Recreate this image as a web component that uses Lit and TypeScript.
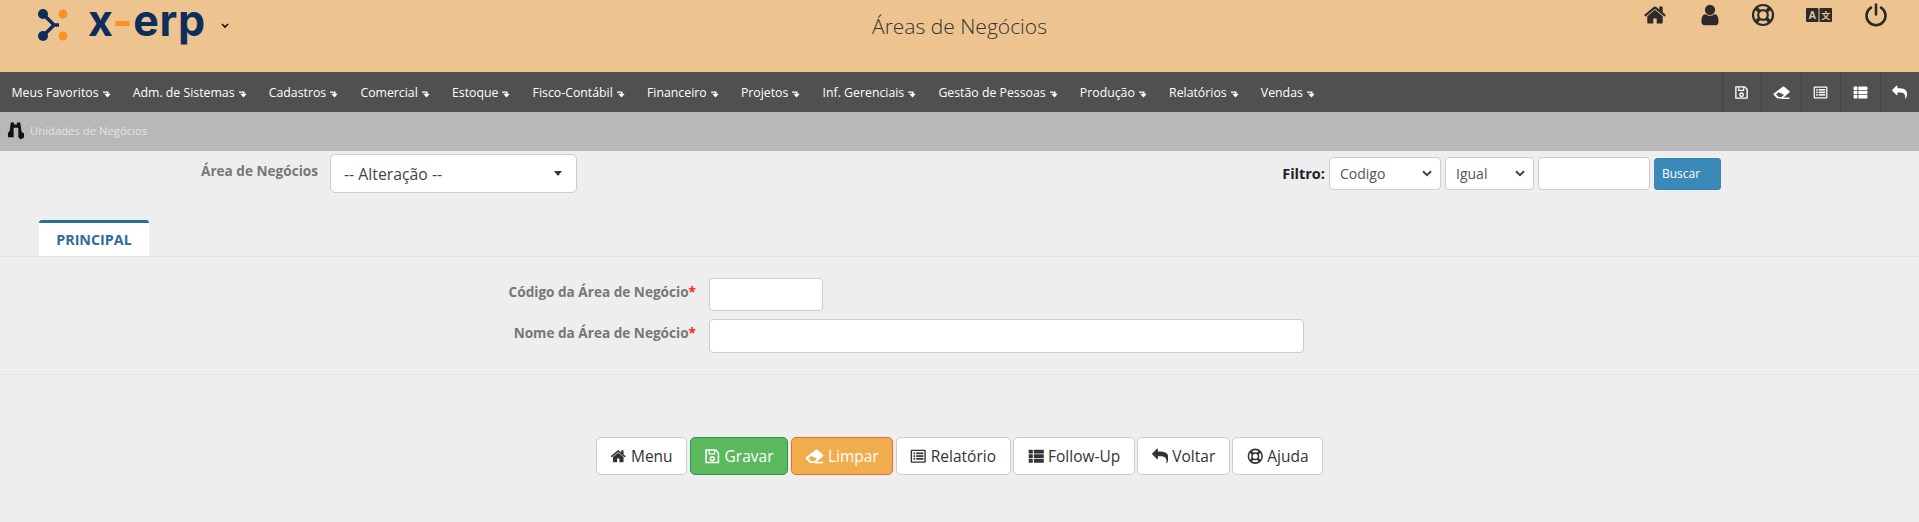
import { LitElement, css, html, svg } from "lit";
import { customElement } from "lit/decorators.js";

const fa = (d: string, w = 1792) =>
  html`<svg class="ico" viewBox="0 0 ${w} 1792" fill="currentColor"><path d=${d}></path></svg>`;

const home = () => fa("M1472 992v480q0 26-19 45t-45 19h-384v-384h-256v384h-384q-26 0-45-19t-19-45v-480q0-1 .5-3t.5-3l575-474 575 474q1 2 1 6zm223-69l-62 74q-8 9-21 11h-3q-13 0-21-7l-692-577-692 577q-12 8-24 7-13-2-21-11l-62-74q-8-10-7-23.500t11-21.500l719-599q32-26 76-26t76 26l244 204v-195q0-14 9-23t23-9h192q14 0 23 9t9 23v408l219 182q10 8 11 21.500t-7 23.500z");
const reply = () => fa("M1792 1120q0 166-127 451-3 7-10.500 24t-13.500 30-13 22q-12 17-28 17-15 0-23.500-10t-8.500-25q0-9 2.500-26.500t2.500-23.500q5-68 5-123 0-101-17.500-181t-48.500-138.500-80-101-105.500-69.500-133-42.500-154-21.500-175.500-6h-224v256q0 26-19 45t-45 19-45-19l-512-512q-19-19-19-45t19-45l512-512q19-19 45-19t45 19 19 45v256h224q713 0 875 403 53 134 53 333z");

const eraser = () => html`<svg class="ico wide" viewBox="0 0 24 20" fill="currentColor">
  <path fill-rule="evenodd" d="M14 1.500a2 2 0 0 1 1.600.400l7 6a1.500 1.500 0 0 1 .1 2.200L13 18.500H7a2 2 0 0 1-1.400-.6L1.200 13.500a1.500 1.500 0 0 1 0-2.100zM7.800 9.800l-3.600 3 3.700 3.500h4.300l3.100-3z"></path>
  <rect x="12" y="17" width="11" height="2"></rect>
</svg>`;

const save = () => html`<svg class="ico" viewBox="0 0 24 24" fill="none" stroke="currentColor" stroke-width="2.200">
  <path d="M3 3h14l4 4v14H3z"></path>
  <path d="M7.500 3v5.500h8V3" stroke-width="1.800"></path>
  <circle cx="12" cy="15.500" r="2.800"></circle>
</svg>`;

const listAlt = () => html`<svg class="ico" viewBox="0 0 24 24" fill="currentColor">
  <path fill-rule="evenodd" d="M2.500 2.500h19a1.500 1.500 0 0 1 1.500 1.500v16a1.500 1.500 0 0 1-1.500 1.500h-19A1.500 1.500 0 0 1 1 20V4a1.500 1.500 0 0 1 1.500-1.500zM3 4.500v15h18v-15z"></path>
  ${[6.5, 10.5, 14.5].map((y) => svg`<rect x="5" y=${y} width="2.500" height="2.500"></rect><rect x="9" y=${y} width="10.500" height="2.500"></rect>`)}
</svg>`;

const thList = () => html`<svg class="ico" viewBox="0 0 24 24" fill="currentColor">
  ${[2.5, 9.2, 15.9].map((y) => svg`<rect x="1" y=${y} width="6" height="5.600" rx=".6"></rect><rect x="8.500" y=${y} width="14.500" height="5.600" rx=".6"></rect>`)}
</svg>`;

const lifeRing = () => html`<svg class="ico" viewBox="0 0 24 24" fill="none" stroke="currentColor">
  <circle cx="12" cy="12" r="10" stroke-width="2.200"></circle>
  <circle cx="12" cy="12" r="4.800" stroke-width="2.200"></circle>
  <path d="M5 5l4 4M19 5l-4 4M5 19l4-4M19 19l-4-4" stroke-width="3.600"></path>
</svg>`;

const user = () => fa("M1536 1399q0 109-62.500 187t-150.500 78h-854q-88 0-150.500-78t-62.500-187q0-85 8.500-160.500t31.500-152 58.500-131 94-89 134.500-34.500q131 128 313 128t313-128q76 0 134.500 34.500t94 89 58.500 131 31.500 152 8.500 160.500zm-256-887q0 159-112.500 271.500t-271.500 112.500-271.500-112.500-112.500-271.500 112.500-271.500 271.500-112.500 271.500 112.500 112.500 271.500z");

const power = () => html`<svg class="ico" viewBox="0 0 24 24" fill="none" stroke="currentColor" stroke-width="2.600" stroke-linecap="round">
  <path d="M7 4.600a9.500 9.500 0 1 0 10 0"></path>
  <path d="M12 1.500v10"></path>
</svg>`;

const caret = () => html`<svg class="caret" viewBox="0 0 8 7" fill="currentColor">
  <path d="M0 .5h5.500v2.300H7.800L4.500 6.500 1.200 2.800h2.800V1.800H0z"></path>
</svg>`;

const binoculars = () => html`<svg class="binoc" viewBox="0 0 18 20" fill="currentColor">
  <path d="M4 1H7.500V3H10.500V1H14L15.500 11L18 12.500V17L14.500 19L12 16.500V6.500H7V16.500H1V12L2.800 10Z"></path>
</svg>`;

const NAV = [
  "Meus Favoritos", "Adm. de Sistemas", "Cadastros", "Comercial", "Estoque", "Fisco-Contábil",
  "Financeiro", "Projetos", "Inf. Gerenciais", "Gestão de Pessoas", "Produção", "Relatórios", "Vendas",
];

const ACTIONS = [
  { label: "Menu", icon: home, cls: "" },
  { label: "Gravar", icon: save, cls: "ok" },
  { label: "Limpar", icon: eraser, cls: "warn" },
  { label: "Relatório", icon: listAlt, cls: "" },
  { label: "Follow-Up", icon: thList, cls: "" },
  { label: "Voltar", icon: reply, cls: "" },
  { label: "Ajuda", icon: lifeRing, cls: "" },
];

@customElement("app-root")
export class AppRoot extends LitElement {
  static styles = css`
    :host {
      display: block;
      min-height: 522px;
      background: #eeeeee;
      font-family: "Open Sans", "Liberation Sans", sans-serif;
      color: #333;
    }
    .ico {
      display: block;
      width: 1em;
      height: 1em;
      flex: none;
    }
    .ico.wide {
      width: 1.15em;
    }

    /* topo */
    .top {
      height: 72px;
      background: #edc490;
      display: grid;
      grid-template-columns: 1fr auto 1fr;
    }
    .brand {
      display: flex;
      align-items: flex-start;
      padding-left: 37px;
    }
    .brand svg.mark {
      width: 32px;
      height: 34px;
      flex: none;
      margin-top: 9px;
    }
    .brand .word {
      margin-left: 19px;
      font-family: Inter, "Open Sans", sans-serif;
      font-weight: 700;
      font-size: 43px;
      line-height: 0.95;
      letter-spacing: 0.6px;
      color: #0d2d5c;
    }
    .brand .word span {
      color: #f7931e;
    }
    .brand .chev {
      width: 8px;
      height: 6px;
      margin: 23px 0 0 15px;
    }
    .title {
      font-size: 21px;
      font-weight: 300;
      line-height: 52px;
      color: #333;
    }
    .quick {
      justify-self: end;
      display: grid;
      grid-template-columns: 54px 56px 50px 62px 52px;
      padding: 3px 17px 0 0;
      height: 24px;
      justify-items: center;
      align-items: center;
      color: #2b2b2b;
      font-size: 24px;
    }
    .lang {
      width: 26px;
      height: 14px;
      font-family: "Liberation Sans", "Noto Sans CJK SC", sans-serif;
    }

    /* menu */
    .menu {
      height: 40px;
      background: #505050;
      color: #fff;
      display: flex;
      align-items: center;
      font-size: 12.300px;
    }
    .menu ul {
      flex: 1;
      display: flex;
      margin: 0;
      padding: 0 0 0 .4px;
      list-style: none;
    }
    .menu li {
      display: flex;
      align-items: center;
      padding: 0 11.100px;
      white-space: nowrap;
    }
    .caret {
      width: 8px;
      height: 7px;
      margin: 4px 0 0 4px;
    }
    .tools {
      display: flex;
      height: 100%;
      font-size: 15px;
    }
    .tools div {
      width: 39.500px;
      display: flex;
      align-items: center;
      justify-content: center;
      border-left: 1px solid #444;
      box-sizing: border-box;
    }

    /* trilha */
    .crumb {
      height: 39px;
      background: #b8b8b8;
      display: flex;
      align-items: center;
      padding-left: 7px;
      padding-bottom: 2px;
      box-sizing: border-box;
      gap: 6px;
      font-size: 11.300px;
      color: #e4e4e4;
    }
    .binoc {
      width: 17px;
      height: 20px;
      color: #111;
    }

    /* filtro */
    .head {
      display: flex;
      padding: 3px 198px 0 201px;
    }
    .head .lbl {
      font-size: 13.600px;
      font-weight: 700;
      color: #777;
      line-height: 34px;
      width: 129px;
    }
    .combo {
      width: 246.500px;
      height: 39px;
      box-sizing: border-box;
      background: #fff;
      border: 1px solid #ccc;
      border-radius: 5px;
      display: flex;
      align-items: center;
      justify-content: space-between;
      padding: 0 14px 0 13px;
      font-size: 15.800px;
      color: #444;
    }
    .combo i {
      border: 4.500px solid transparent;
      border-top: 5px solid #333;
      border-bottom: 0;
    }
    .filter {
      margin-left: auto;
      display: flex;
      align-items: center;
      height: 33px;
      margin-top: 3px;
      gap: 4px;
    }
    .filter b {
      font-size: 14.500px;
      color: #222;
    }
    .filter select,
    .filter input {
      height: 33px;
      box-sizing: border-box;
      background: #fff;
      border: 1px solid #ccc;
      border-radius: 4px;
      font: 14px "Open Sans", sans-serif;
      color: #555;
      padding: 0 10px;
    }
    .filter select {
      appearance: none;
      background: #fff
        url("data:image/svg+xml,%3Csvg xmlns='http://www.w3.org/2000/svg' width='10' height='7'%3E%3Cpath d='M1 1.200l4 4 4-4' fill='none' stroke='%23444' stroke-width='2'/%3E%3C/svg%3E")
        no-repeat right 8px center;
    }
    .filter .buscar {
      width: 67px;
      height: 32px;
      box-sizing: border-box;
      background: #3b89b8;
      border: 1px solid #3a83ad;
      border-radius: 3px;
      color: #fff;
      font: 12px "Open Sans", sans-serif;
      padding: 0 0 0 7px;
      text-align: left;
    }

    /* abas */
    .tabs {
      margin-top: 27px;
      padding-left: 39px;
      border-bottom: 1px solid #e0e0e0;
    }
    .tab {
      width: 110px;
      height: 36px;
      box-sizing: border-box;
      background: #fff;
      border-top: 3px solid #2c6e99;
      border-radius: 3px 3px 0 0;
      color: #2c6e99;
      font-size: 14.300px;
      font-weight: 700;
      display: flex;
      align-items: center;
      justify-content: center;
      padding-bottom: 1px;
    }

    /* form */
    .form {
      display: grid;
      grid-template-columns: 696px 1fr;
      column-gap: 13px;
      row-gap: 8px;
      align-items: start;
      padding: 21px 0 21px;
      border-bottom: 1px solid #e4e4e4;
    }
    .form label {
      text-align: right;
      font-size: 13.600px;
      font-weight: 700;
      color: #777;
      line-height: 26px;
      padding-top: 1px;
    }
    .form label em {
      color: #f22;
      font-style: normal;
    }
    .form input {
      display: block;
      box-sizing: border-box;
      background: #fff;
      border: 1px solid #ccc;
      border-radius: 4px;
      padding: 0;
    }
    .w-code {
      width: 114px;
      height: 33px;
    }
    .w-name {
      width: 595px;
      height: 34px;
    }

    /* botoes */
    .actions {
      display: flex;
      justify-content: center;
      gap: 2.500px;
      margin-top: 62px;
    }
    .btn {
      height: 38px;
      box-sizing: border-box;
      display: flex;
      align-items: center;
      gap: 4px;
      padding: 0 13.500px;
      background: #fff;
      border: 1px solid #ccc;
      border-radius: 5px;
      font: 15.500px "Open Sans", sans-serif;
      color: #333;
    }
    .btn .ico {
      font-size: 16.500px;
    }
    .btn.ok {
      background: #5cb85c;
      border-color: #1f9d55;
      color: #fff;
    }
    .btn.warn {
      background: #f0ad4e;
      border-color: #f26b2a;
      color: #fff;
    }
  `;

  render() {
    return html`
      <header class="top">
        <div class="brand">
          <svg class="mark" viewBox="0 0 32 34">
            <path d="M6 5l11 11L6 27M17 16h5" fill="none" stroke="#0d2d5c" stroke-width="3.500"></path>
            <circle cx="6" cy="5" r="5" fill="#0d2d5c"></circle>
            <circle cx="6" cy="27" r="5" fill="#0d2d5c"></circle>
            <circle cx="26" cy="5" r="4.500" fill="#f7931e"></circle>
            <circle cx="26" cy="27" r="4.500" fill="#f7931e"></circle>
          </svg>
          <div class="word">x<span>-</span>erp</div>
          <svg class="chev" viewBox="0 0 8 6" fill="none" stroke="#111" stroke-width="1.600"><path d="M1 1l3 3 3-3"></path></svg>
        </div>
        <div class="title">Áreas de Negócios</div>
        <div class="quick">
          ${home()} ${user()} ${lifeRing()}
          <svg class="lang" viewBox="0 0 26 14">
            <rect width="12.500" height="14" rx="1" fill="#2b2b2b"></rect>
            <rect x="13.500" width="12.500" height="14" rx="1" fill="#2b2b2b"></rect>
            <text x="6.250" y="11" font-size="10.500" font-weight="700" text-anchor="middle" fill="#edc490">A</text>
            <text x="19.750" y="11" font-size="9" font-weight="700" text-anchor="middle" fill="#edc490">文</text>
          </svg>
          ${power()}
        </div>
      </header>

      <nav class="menu">
        <ul>
          ${NAV.map((n) => html`<li>${n}${caret()}</li>`)}
        </ul>
        <div class="tools">
          <div>${save()}</div>
          <div>${eraser()}</div>
          <div>${listAlt()}</div>
          <div>${thList()}</div>
          <div>${reply()}</div>
        </div>
      </nav>

      <div class="crumb">${binoculars()} Unidades de Negócios</div>

      <section class="head">
        <div class="lbl">Área de Negócios</div>
        <div class="combo">-- Alteração --<i></i></div>
        <div class="filter">
          <b>Filtro:</b>
          <select style="width:112px"><option>Codigo</option></select>
          <select style="width:89px"><option>Igual</option></select>
          <input style="width:112px" />
          <button class="buscar">Buscar</button>
        </div>
      </section>

      <div class="tabs"><div class="tab">PRINCIPAL</div></div>

      <section class="form">
        <label>Código da Área de Negócio<em>*</em></label>
        <input class="w-code" />
        <label>Nome da Área de Negócio<em>*</em></label>
        <input class="w-name" />
      </section>

      <div class="actions">
        ${ACTIONS.map(
          (a) => html`<button class="btn ${a.cls}">${a.icon()}${a.label}</button>`
        )}
      </div>
    `;
  }
}
